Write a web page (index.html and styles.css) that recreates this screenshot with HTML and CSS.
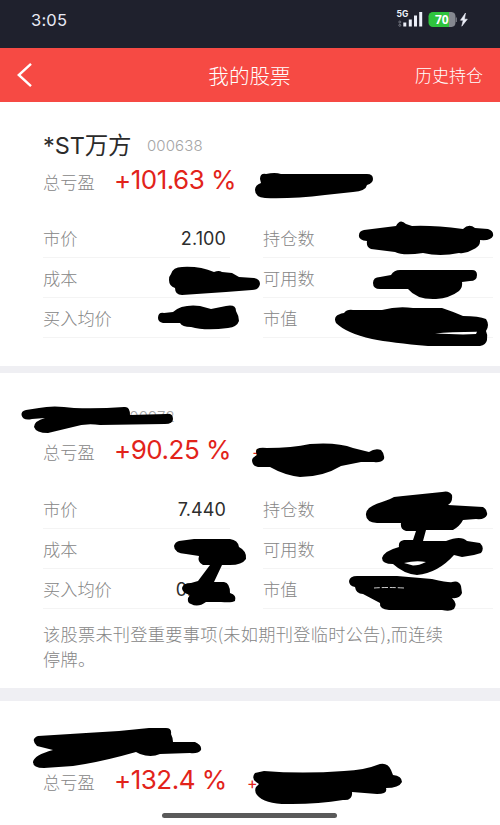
FILE: index.html
```html
<!DOCTYPE html>
<html lang="zh-CN">
<head>
<meta charset="utf-8">
<title>我的股票</title>
<link rel="stylesheet" href="styles.css">
</head>
<body>
<div class="screen">
  <div class="status">
    <span class="time">3:05</span>
    <svg class="status-icons" width="76" height="22" viewBox="395 8 76 22">
      <text x="396.500" y="17" class="net">5G</text>
      <circle cx="399.8" cy="22" r="1" fill="none" stroke="#777a84"/>
      <circle cx="399.8" cy="25.3" r="1" fill="none" stroke="#777a84"/>
      <path d="M403.3 22.5h3v4h-3zM408.8 19.5h3v7h-3zM414 15.5h3v11h-3zM419.2 12h3v14.500h-3z" fill="#eceff8"/>
      <path d="M433 12h16v15h-16a4.500 4.500 0 0 1-4.500-4.500v-6a4.500 4.500 0 0 1 4.500-4.500z" fill="#2fc43d"/>
      <path d="M449 12h2.500a4.500 4.500 0 0 1 4 4.500v6a4.500 4.500 0 0 1-4 4.500h-2.500z" fill="#858890"/>
      <path d="M456.300 17.500v4.500" stroke="#858890"/>
      <text x="435" y="24" class="battery">70</text>
      <path d="M465.500 13l-5 7.200h2.700l-1.400 6 5.500-7h-2.900z" fill="#eceff8" stroke="#eceff8" stroke-width=".6"/>
    </svg>
  </div>
  <div class="nav">
    <svg class="back" width="18" height="26" viewBox="0 0 18 26"><path d="M15 1.800L2.800 13 15 24.200" fill="none" stroke="#fff" stroke-width="2.400"/></svg>
    <span class="title">我的股票</span>
    <span class="history">历史持仓</span>
  </div>

  <div class="card first">
    <div class="name"><span class="stock">*ST万方</span><span class="code">000638</span></div>
    <div class="profit"><span class="label">总亏盈</span><span class="pct">+101.63 %</span></div>
    <div class="grid">
      <div class="row"><span>市价</span><span class="value">2.100</span></div>
      <div class="row"><span>持仓数</span></div>
      <div class="row"><span>成本</span></div>
      <div class="row"><span>可用数</span></div>
      <div class="row"><span>买入均价</span></div>
      <div class="row"><span>市值</span></div>
    </div>
  </div>

  <div class="card second">
    <div class="name"><span class="code hidden-code">000972</span></div>
    <div class="profit"><span class="label">总亏盈</span><span class="pct">+90.25 %</span><span class="plus">+</span></div>
    <div class="grid">
      <div class="row"><span>市价</span><span class="value">7.440</span></div>
      <div class="row"><span>持仓数</span></div>
      <div class="row"><span>成本</span></div>
      <div class="row"><span>可用数</span></div>
      <div class="row"><span>买入均价</span><span class="value">0.000</span></div>
      <div class="row"><span>市值</span></div>
    </div>
    <p class="note">该股票未刊登重要事项(未如期刊登临时公告),而连续停牌。</p>
  </div>

  <div class="card third">
    <div class="name"></div>
    <div class="profit"><span class="label">总亏盈</span><span class="pct">+132.4 %</span><span class="plus">+</span></div>
  </div>

  <svg class="marks" width="500" height="825" viewBox="0 0 500 825">
    <path d="M260 179Q260 173 266 174Q275 172 281 174H367Q373 174 373 179Q373 183 367 185Q366 191 353 192L325 195Q292 199 265 198Q255 197 255 190Q255 185 261 183Z"/>
    <path d="M364 230L396 226Q400 218 406 224L412 226Q432 225 463 229Q469 223 475 228L488 229Q494 231 493 236Q491 241 480 240Q481 247 472 250Q466 254 459 253Q440 257 423 253Q403 256 395 252L371 249Q366 247 367 241Q358 240 359 235Q359 231 364 230Z"/>
    <path d="M171 274Q173 267 182 267Q200 266 214 272Q219 270 222 272L232 273L239 277L254 278Q260 279 260 284Q259 290 252 290L226 292L182 295Q175 295 175 288Q169 286 169 280Q169 276 171 274Z"/>
    <path d="M373 283Q373 277 380 277L391 275Q394 270 400 270H472Q477 270 477 275Q477 281 470 281L462 282Q463 287 459 291Q450 298 436 299Q417 300 408 289L380 289Q373 289 373 283Z"/>
    <path d="M173 312Q182 304 200 306L211 309L226 306Q236 304 236 311Q239 316 239 321Q237 327 228 328Q205 331 191 327Q182 327 180 323H163Q158 322 158 318Q158 312 164 313Z"/>
    <path fill-rule="evenodd" d="M344 313Q347 309 353 310H382Q397 306 413 308H442Q454 312 463 316Q479 316 486 319Q490 325 486 331Q488 335 487 340Q486 345 480 346H428Q392 343 372 339Q346 333 336 323Q332 315 344 313ZM435 333.500L463 334.500L476 334L477 331.800Q450 332 435 333.500Z"/>
    <path d="M26 410Q21 411 21.500 415Q23 421 32 419L45 418Q34 421 34 427Q36 433 48 433L73 427Q85 423 100 425L165 424Q173 424 173 419Q173 413 166 414L130 415Q130 406 124 407Q98 409 74 408Q53 405 39 408Z"/>
    <path d="M257 449Q260 447 267 448Q292 448 310 444Q338 442 353 448L369 452Q375 448 381 450Q385 454 384 459Q381 463 374 462H361L341 466Q323 477 300 477Q284 475 270 467H258Q252 466 252 460Q253 457 257 455Q255 451 257 449Z"/>
    <path d="M394 497L403 496L442 492Q449 490 452 495Q453 502 448 505L483 507Q488 510 487 515Q485 520 476 519L463 520Q460 526 453 530H426L423 541L446 541Q461 535 467 541L480 543Q485 548 481 553L474 555L462 557L454 555Q438 573 417 575Q404 574 393 564Q382 564 382 558Q384 551 399 547Q398 541 404 540H413L416 531H406Q400 529 401 523L377 523Q366 522 366 515Q365 507 382 502Q391 499 394 497Z"/>
    <path fill="#fff" d="M404 563Q416 560 426 562Q419 565.500 413 565.500Z"/>
    <path d="M179 541L194 539H230Q238 540 239 547Q247 551 246 559Q242 565 230 565H222L214 582H224Q230 583 230 593Q237 595 235 601Q232 603 221 602L206 602Q198 608 191 604Q187 603 188 598L190 595Q182 593 182 588Q183 583 191 583L198 581L210 565H203Q197 562 199 556L186 554Q174 553 174 546Q175 542 179 541Z"/>
    <path d="M349 581Q350 576 357 576H397L432 579Q450 583 452 582Q459 580 461 586L462 593Q460 599 452 598Q458 604 454 609Q450 612 442 610H389Q379 609 380 603L363 594Q356 594 355 587Q349 586 349 581Z"/>
    <path d="M374 588q13-1 30 0" fill="none" stroke="#fff" stroke-width=".8" stroke-dasharray="6 2"/>
    <path d="M38 736L86 733L119 731L149 728H166Q172 728 171 734Q173 738 173 742L195 742Q202 745 201 750Q198 754 190 753L160 754Q151 758 140 754L136 752Q101 762 73 766L44 768Q33 768 33 762Q34 755 53 750L37 746Q30 739 38 736Z"/>
    <path d="M255 773L264 771Q302 774 344 771Q365 770 377 765Q387 761 391 770L393 775Q402 776 402 782Q399 788 386 788Q388 794 377 794L352 792Q353 801 343 800Q319 804 292 804Q265 805 257 795Q254 791 256 787L259 784Q250 779 255 773Z"/>
  </svg>
  <div class="home"></div>
</div>
</body>
</html>
```
FILE: styles.css
```css
* { box-sizing: border-box; }
body {
  margin: 0;
  background: #fff;
  font-family: "Noto Sans CJK SC", sans-serif;
  font-weight: 300;
  color: #858585;
}
.screen {
  position: relative;
  display: flex;
  flex-direction: column;
  width: 500px;
  height: 825px;
  overflow: hidden;
}
.status {
  display: flex;
  justify-content: space-between;
  height: 48px;
  padding: 8px 29px 0 31px;
  background: #1f212d;
}
.time {
  font: 400 16.5px/25px Inter, sans-serif;
  letter-spacing: .2px;
  color: #e8eaf5;
}
.net { font: 700 8.5px Inter, sans-serif; fill: #eceff8; }
.battery { font: 700 12px "Open Sans", sans-serif; fill: #fff; }
.nav {
  display: grid;
  grid-template-columns: 1fr auto 1fr;
  align-items: center;
  height: 54px;
  padding: 0 17px 0 16px;
  background: #f64a44;
  color: #fff;
}
.title { height: 54px; font-size: 20.6px; line-height: 54px; }
.history { height: 54px; justify-self: end; font-size: 17px; line-height: 54px; }
.card { flex: none; padding: 0 7px 0 43px; }
.first { height: 271px; padding-top: 28px; border-bottom: 7px solid #efeff3; }
.second { height: 328px; padding-top: 28px; border-bottom: 13px solid #efeff3; }
.third { height: 124px; padding-top: 28px; }
.name { display: flex; align-items: center; height: 32px; }
.stock {
  width: 104px;
  font: 400 23.5px/32px Inter, "Noto Sans CJK SC", sans-serif;
  letter-spacing: -.1px;
  color: #2b2b2b;
}
.code {
  font: 300 15px/30px Inter, sans-serif;
  letter-spacing: .1px;
  color: #a5a5a5;
}
.hidden-code { margin-left: 77px; }
.profit { display: flex; align-items: center; height: 38px; font-size: 17.2px; }
.label { width: 71px; }
.pct {
  width: 138px;
  margin-top: -3px;
  font: 400 26px/38px Inter, sans-serif;
  letter-spacing: -.5px;
  color: #e2231a;
  white-space: nowrap;
}
.plus { font: 400 16px/38px Inter, sans-serif; color: #e2231a; }
.third .plus { margin: 3px 0 0 -5px; }
.grid {
  display: grid;
  grid-template-columns: 187px 230px;
  column-gap: 33px;
  margin-top: 18px;
}
.row {
  display: flex;
  justify-content: space-between;
  height: 40px;
  padding-right: 4px;
  border-bottom: 1px solid #f4f4f4;
  font-size: 17.2px;
  line-height: 39px;
}
.value {
  font: 400 18px/41px Inter, sans-serif;
  letter-spacing: .1px;
  color: #2d2d2d;
}
.second .profit { height: 37px; }
.second .grid { margin-top: 19px; }
.note {
  width: 408px;
  margin: 12px 0 0;
  font-size: 17.2px;
  letter-spacing: .28px;
  line-height: 25px;
}
.third .profit { margin-top: 1px; }
.marks { position: absolute; left: 0; top: 0; }
.home {
  position: absolute;
  left: 162px;
  top: 813px;
  width: 175px;
  height: 5px;
  border-radius: 3px;
  background: #5a5a5a;
}
```
